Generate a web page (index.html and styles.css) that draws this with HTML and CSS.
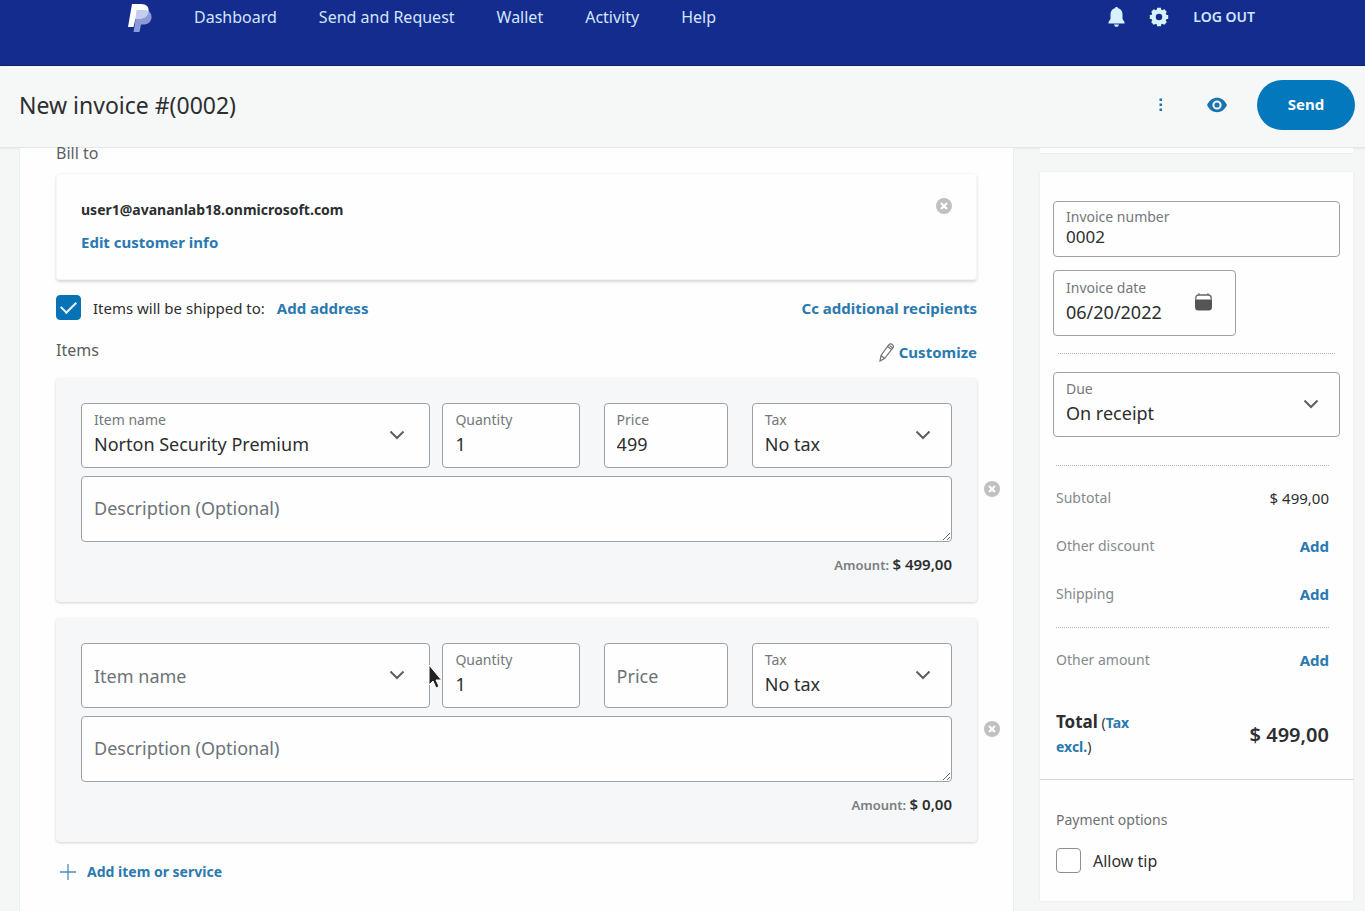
FILE: index.html
```html
<!DOCTYPE html>
<html lang="en">
<head>
<meta charset="utf-8">
<title>New invoice</title>
<link rel="stylesheet" href="styles.css">
</head>
<body>
<svg class="defs" aria-hidden="true">
  <symbol id="chevron" viewBox="0 0 16 10"><path d="M1.500 1.500 8 8l6.500-6.500" fill="none" stroke="#5b6064" stroke-width="2"/></symbol>
  <symbol id="remove" viewBox="0 0 16 16"><circle cx="8" cy="8" r="8" fill="#bfc1c1"/><path d="m5 5 6 6m0-6-6 6" stroke="#fff" stroke-width="2.200"/></symbol>
</svg>
<header class="topbar">
  <a class="logo" href="#" aria-label="Home">
    <svg viewBox="0 0 24 29" width="24" height="29">
      <path d="M9 6h9c4 1 6 4 5.500 8-.8 4.500-4 6.500-8.500 6.500h-2L11.500 28H5.500z" fill="#8c9bd8"/>
      <path d="M4 0h9c5.500 0 8 3 7.500 7-.8 5-4 7.500-9 7.500H7.500L5.500 23H0z" fill="#fff"/>
      <path d="M8.500 6h9.500c1 .4 1.900 1 2.500 1.500-.8 4.700-4 7-9 7H7.500z" fill="#c4cdee"/>
    </svg>
  </a>
  <nav class="nav">
    <a href="#">Dashboard</a><a href="#">Send and Request</a><a href="#">Wallet</a><a href="#">Activity</a><a href="#">Help</a>
  </nav>
  <div class="account">
    <button class="icon" aria-label="Notifications"><svg width="17" height="20" viewBox="0 0 17 20" fill="#d8f1ff"><path d="M8.500 0c1 0 1.500.6 1.600 1.300C13 2 14.500 4.500 14.500 7.500V12l2 3v1.500H.5V15l2-3V7.500c0-3 1.500-5.500 4.400-6.200C7 .6 7.500 0 8.500 0zM6 17.500h5c-.4 1.500-1.200 2.300-2.500 2.300S6.400 19 6 17.500z"/></svg></button>
    <button class="icon" aria-label="Settings"><svg width="20" height="20" viewBox="0 0 20 20"><circle cx="10" cy="10" r="5.500" fill="none" stroke="#d8f1ff" stroke-width="4.500"/><path d="M10 .8v3M10 16.200v3M.8 10h3M16.200 10h3M3.500 3.500l2 2M14.500 14.500l2 2M3.500 16.500l2-2M14.500 5.500l2-2" stroke="#d8f1ff" stroke-width="4"/></svg></button>
    <a class="logout" href="#">LOG OUT</a>
  </div>
</header>
<div class="titlebar">
  <h1>New invoice #(0002)</h1>
  <button class="icon" aria-label="More"><svg width="6" height="16" viewBox="0 0 6 16" fill="#2474ae"><path d="M1.500 1.500H4V4H1.500zM1.500 6.500H4V9H1.500zM1.500 11.500H4V14H1.500z"/></svg></button>
  <button class="icon" aria-label="Preview"><svg width="20" height="16" viewBox="0 0 20 16"><path d="M0 8C2.500 3.200 5.900.8 10 .8S17.500 3.200 20 8c-2.500 4.800-5.900 7.200-10 7.200S2.500 12.800 0 8z" fill="#1873b0"/><circle cx="10" cy="8" r="3.600" fill="none" stroke="#f5f9fb" stroke-width="2"/></svg></button>
  <button class="send">Send</button>
</div>
<div class="page">
  <main class="invoice">
    <h2 class="heading">Bill to</h2>
    <section class="customer">
      <div class="customer-info">
        <strong>user1@avananlab18.onmicrosoft.com</strong>
        <a class="link" href="#">Edit customer info</a>
      </div>
      <button class="icon" aria-label="Remove customer"><svg width="16" height="16"><use href="#remove"/></svg></button>
    </section>
    <div class="shipping">
      <input class="tick" type="checkbox" id="ship" checked>
      <label for="ship">Items will be shipped to:</label>
      <a class="link" href="#">Add address</a>
      <a class="link end" href="#">Cc additional recipients</a>
    </div>
    <div class="items-head">
      <h2>Items</h2>
      <a class="link customize" href="#"><svg width="15" height="19" viewBox="0 0 15 19" fill="none" stroke="#737373" stroke-width="1.200"><path d="M1 18l1-5.500L9.500 2.200c1-1.400 2.600-1.700 3.800-.8s1.300 2.500.4 3.800L5.500 15.500zM8.500 3.500l4.200 3.200M2 12.500l3.500 3M10.500 2.500l3 2.400"/></svg>Customize</a>
    </div>

    <div class="item">
      <section class="item-card">
        <div class="fields">
          <div class="field name"><label for="n1">Item name</label><input id="n1" value="Norton Security Premium"><svg class="chevron"><use href="#chevron"/></svg></div>
          <div class="field qty"><label for="q1">Quantity</label><input id="q1" value="1"></div>
          <div class="field price"><label for="p1">Price</label><input id="p1" value="499"></div>
          <div class="field"><label for="t1">Tax</label><select id="t1"><option>No tax</option></select><svg class="chevron"><use href="#chevron"/></svg></div>
        </div>
        <textarea aria-label="Description" placeholder="Description (Optional)"></textarea>
        <p class="amount">Amount: <b>$ 499,00</b></p>
      </section>
      <button class="icon delete" aria-label="Remove item"><svg width="16" height="16"><use href="#remove"/></svg></button>
    </div>

    <div class="item">
      <section class="item-card">
        <div class="fields">
          <div class="field name empty"><input aria-label="Item name" placeholder="Item name"><svg class="chevron"><use href="#chevron"/></svg>
            <svg class="cursor" width="14" height="26" viewBox="0 0 14 26"><path d="M1 1v20l4-4 3 7 3-1.500L8 16h5.500z" fill="#222" stroke="#fff"/></svg></div>
          <div class="field qty"><label for="q2">Quantity</label><input id="q2" value="1"></div>
          <div class="field price empty"><input aria-label="Price" placeholder="Price"></div>
          <div class="field"><label for="t2">Tax</label><select id="t2"><option>No tax</option></select><svg class="chevron"><use href="#chevron"/></svg></div>
        </div>
        <textarea aria-label="Description" placeholder="Description (Optional)"></textarea>
        <p class="amount">Amount: <b>$ 0,00</b></p>
      </section>
      <button class="icon delete" aria-label="Remove item"><svg width="16" height="16"><use href="#remove"/></svg></button>
    </div>

    <a class="link add-item" href="#"><svg width="16" height="16" viewBox="0 0 16 16" stroke="#4d8cb8" stroke-width="1.300"><path d="M8 0v16M0 8h16"/></svg>Add item or service</a>
  </main>

  <aside class="side">
    <div class="panel-end"></div>
    <section class="panel">
      <div class="details">
        <div class="field short"><label for="num">Invoice number</label><input id="num" value="0002"></div>
        <div class="field date"><label for="date">Invoice date</label><input id="date" value="06/20/2022"><svg class="calendar" width="17" height="18" viewBox="0 0 17 18"><path d="M.8 6.500V5c0-2 1-3 3-3h9.400c2 0 3 1 3 3v1.500M4 .3V2.500M13 .3v2.200" fill="none" stroke="#666" stroke-width="1.300"/><path d="M0 6.500h17V14c0 2.500-1 3.500-3.500 3.500h-10C1 17.500 0 16.500 0 14z" fill="#555"/></svg></div>
        <hr class="dots">
        <div class="field"><label for="due">Due</label><select id="due"><option>On receipt</option></select><svg class="chevron"><use href="#chevron"/></svg></div>
      </div>
      <div class="totals">
        <hr class="dots">
        <div class="row"><span>Subtotal</span><span class="value">$ 499,00</span></div>
        <div class="row"><span>Other discount</span><a class="link" href="#">Add</a></div>
        <div class="row"><span>Shipping</span><a class="link" href="#">Add</a></div>
        <hr class="dots">
        <div class="row"><span>Other amount</span><a class="link" href="#">Add</a></div>
        <div class="total"><div class="total-name"><b>Total</b> (<a class="link" href="#">Tax excl.</a>)</div><strong>$ 499,00</strong></div>
      </div>
      <div class="payment">
        <h3>Payment options</h3>
        <div class="tip"><input class="tick" type="checkbox" id="tip"><label for="tip">Allow tip</label></div>
      </div>
    </section>
  </aside>
</div>
</body>
</html>
```
FILE: styles.css
```css
* { box-sizing: border-box; }
body {
  margin: 0;
  height: 100vh;
  display: flex;
  flex-direction: column;
  overflow: hidden;
  background: #f5f7f7;
  color: #2c2e2f;
  font: 16px/24px "Noto Sans", sans-serif;
}
h1, h2, h3, p, hr { margin: 0; }
a { color: inherit; text-decoration: none; }
button, input, select, textarea { font: inherit; color: inherit; }
.defs { position: absolute; width: 0; height: 0; }
.icon { display: flex; padding: 0; border: 0; background: none; }
.link { color: #2a79b0; font-size: 15px; font-weight: 700; }

.topbar {
  display: flex;
  align-items: flex-start;
  flex: none;
  height: 66px;
  padding: 4px 110px 0 128px;
  background: #152c8f;
  border-bottom: 1px solid #14205f;
  color: #d3e6fb;
}
.logo { display: flex; width: 66px; }
.nav { display: flex; gap: 42px; line-height: 26px; }
.account { display: flex; align-items: center; gap: 24px; margin-left: auto; line-height: 26px; }
.logout { font-size: 14px; font-weight: 600; }

.titlebar {
  display: flex;
  align-items: center;
  flex: none;
  height: 82px;
  padding: 0 10px 3px 19px;
  gap: 43px;
  background: #f6f8f8;
  border-bottom: 1px solid #e4e7e8;
  box-shadow: 0 1px 2px #0000000f;
}
h1 { margin-right: auto; font-size: 23px; font-weight: 400; line-height: 32px; }
.send {
  height: 50px;
  width: 98px;
  margin-left: -13px;
  padding: 0 0 3px;
  border: 0;
  border-radius: 25px;
  background: #0478bd;
  color: #fff;
  font-size: 15px;
  font-weight: 700;
}

.page { display: flex; align-items: flex-start; gap: 26px; flex: 1; min-height: 0; padding: 0 12px 0 19px; }
.invoice {
  flex: 1;
  align-self: stretch;
  min-width: 0;
  padding-left: 36px;
  background: #fefefe;
  border: solid #eceff0;
  border-width: 0 1px;
}
h2 { font-size: 16px; font-weight: 400; color: #5c6063; line-height: 24px; }
.invoice .heading { line-height: 10px; }
.customer {
  display: flex;
  justify-content: space-between;
  align-items: flex-start;
  margin: 15px 36px 0 0;
  padding: 24px;
  height: 107px;
  border-radius: 4px;
  border: 1px solid #f6f6f6;
  box-shadow: 0 2px 3px #00000026;
}
.customer-info { display: flex; flex-direction: column; gap: 8px; }
.customer strong { font-size: 14px; }
.shipping { display: flex; align-items: center; gap: 12px; margin: 14px 36px 0 0; height: 27px; }
.shipping label { font-size: 15px; }
.end { margin-left: auto; }
.tick {
  appearance: none;
  width: 25px;
  height: 25px;
  margin: 0;
  border: 1px solid #8b8f92;
  border-radius: 4px;
  background: #fff;
}
.tick:checked { display: grid; place-items: center; background: #0873b4; border-color: #0873b4; }
.tick:checked::after {
  content: "";
  width: 13px;
  height: 7px;
  margin-bottom: 4px;
  border: solid #e3f5ff;
  border-width: 0 0 2px 2px;
  transform: rotate(-45deg);
}
.items-head { display: flex; justify-content: space-between; align-items: center; margin: 15px 36px 14px 0; }
.customize { display: flex; align-items: center; gap: 5px; padding-top: 4px; }

.item { display: flex; align-items: center; margin-bottom: 16px; }
.item-card {
  flex: 1;
  min-width: 0;
  padding: 25px;
  border-radius: 4px;
  background: #f5f7f8;
  box-shadow: 0 1px 3px #0000002e;
}
.delete { width: 36px; padding: 0 0 3px 7px; }
.fields { display: grid; grid-template-columns: 361fr 161fr 148fr 200fr; }
.name { margin-right: 12px; }
.qty, .price { margin-right: 24px; }
.field {
  position: relative;
  display: flex;
  flex-direction: column;
  justify-content: center;
  min-width: 0;
  height: 65px;
  padding: 0 12px 3px;
  border: 1px solid #9da1a4;
  border-radius: 4px;
  background: #fefefe;
}
.empty { padding-bottom: 0; }
.field label { font-size: 14px; line-height: 20px; color: #74787b; }
.field input, .field select {
  appearance: none;
  width: 100%;
  height: 28px;
  padding: 0;
  border: 0;
  background: none;
  outline: none;
  font-size: 18px;
}
::placeholder { color: #6c7378; opacity: 1; }
.chevron { position: absolute; right: 20px; top: 26px; width: 16px; height: 10px; }
.name .chevron { right: 24px; }
.cursor { position: absolute; right: -13px; top: 20px; z-index: 1; }
textarea {
  display: block;
  width: 100%;
  height: 66px;
  margin-top: 8px;
  padding: 18px 12px;
  border: 1px solid #9da1a4;
  border-radius: 4px;
  background: #fefefe;
  font-size: 18px;
  line-height: 26px;
  resize: vertical;
  overflow: hidden;
}
.amount { margin-top: 10px; text-align: right; font-size: 13px; font-weight: 600; color: #7a7e81; }
.amount b { font-size: 15px; font-weight: 600; color: #2c2e2f; }
.add-item { display: inline-flex; align-items: center; gap: 11px; margin: 2px 0 0 4px; font-size: 14px; }

.side { width: 24%; max-width: 313px; flex: none; font-size: 14px; }
.panel-end { height: 6px; background: #fefefe; border-bottom: 1px solid #e9eced; margin-bottom: 18px; }
.panel { background: #fefefe; box-shadow: 0 0 2px #00000014; }
.details { padding: 29px 13px 0; }
.details .short { height: 56px; padding-bottom: 4px; }
.details .date { width: 183px; height: 66px; margin-top: 13px; }
.short input { height: 20px; font-size: 17px; }
.calendar { position: absolute; right: 23px; top: 22px; }
.dots { border: 0; border-top: 1px dotted #b4b8ba; }
.details .dots { margin: 17px 5px 18px; }
.totals { padding: 28px 24px 20px 16px; }
.row { display: flex; justify-content: space-between; align-items: center; height: 48px; color: #85898c; }
.totals .dots + .row { margin-top: 8px; }
.totals .row + .dots { margin-top: 9px; }
.value { color: #2c2e2f; font-size: 15px; }
.total { display: flex; justify-content: space-between; align-items: center; margin-top: 26px; }
.total-name { width: 100px; }
.total b { font-size: 17px; }
.total .link { font-size: 14px; }
.total strong { font-size: 20px; font-weight: 600; }
.payment { padding: 28px 16px; border-top: 1px solid #d3d6d8; }
h3 { font-size: 14px; font-weight: 400; line-height: 24px; color: #6c7073; }
.tip { display: flex; align-items: center; gap: 12px; margin-top: 16px; font-size: 16px; }
```
